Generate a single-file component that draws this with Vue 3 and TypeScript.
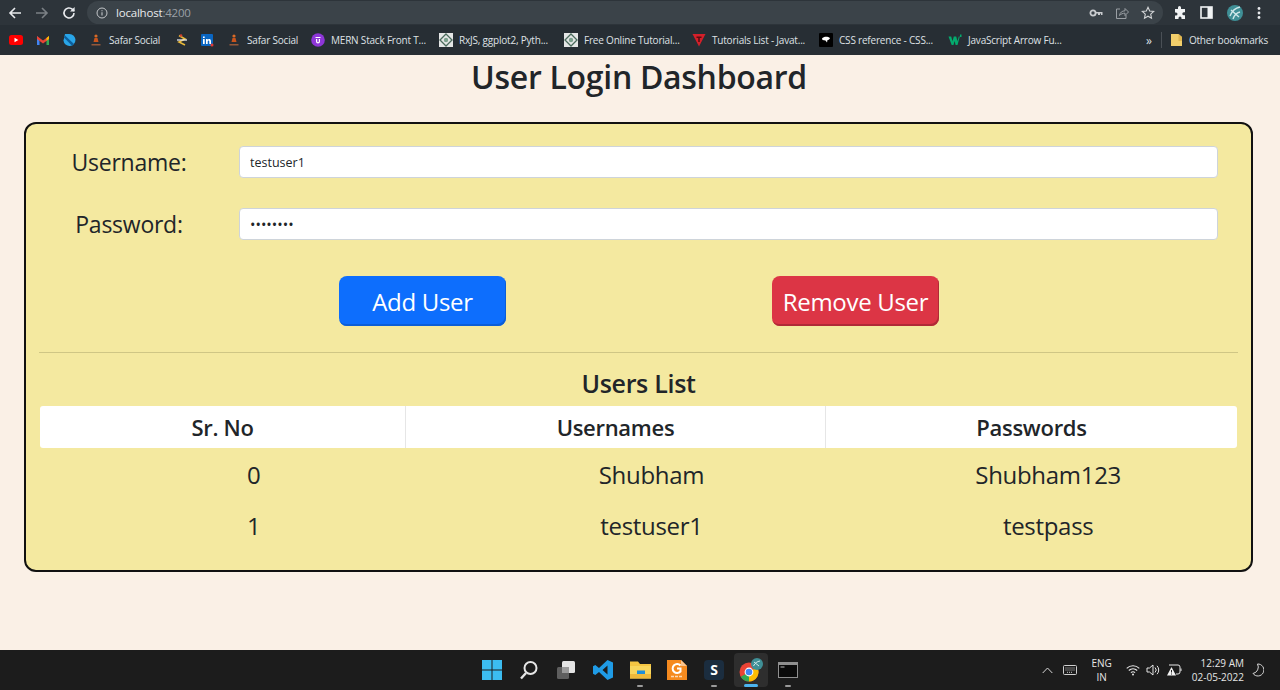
<template>
  <div class="screen">
    <div class="toolbar">
      <svg class="nav" width="16" height="16" viewBox="0 0 16 16"><path d="M14 8H3M8 3 3 8l5 5" fill="none" stroke="#e8eaed" stroke-width="1.6" /></svg>
      <svg class="nav fwd" width="16" height="16" viewBox="0 0 16 16"><path d="M2 8h11M8 3l5 5-5 5" fill="none" stroke="#7b8085" stroke-width="1.6" /></svg>
      <svg class="nav" width="16" height="16" viewBox="0 0 16 16"><path d="M13 8a5 5 0 1 1-1.5-3.6L13 6" fill="none" stroke="#e8eaed" stroke-width="1.6" /><path d="M13.6 2v4.6H9z" fill="#e8eaed" /></svg>
      <div class="omnibox">
        <svg width="12" height="12" viewBox="0 0 12 12"><circle cx="6" cy="6" r="5" fill="none" stroke="#c4c7ca" stroke-width="1" /><path d="M6 5.2v3.4M6 3.2v1" stroke="#c4c7ca" stroke-width="1.1" /></svg>
        <span class="url">localhost<span class="port">:4200</span></span>
        <span class="spacer"></span>
        <svg class="omni-icon" width="14" height="10" viewBox="0 0 14 10"><circle cx="4" cy="5" r="2.6" fill="none" stroke="#c9cccf" stroke-width="1.8" /><path d="M6.5 4h7v3h-1.5V5.6h-1V7H9V5.6H6.500z" fill="#c9cccf" /></svg>
        <svg class="omni-icon" width="14" height="14" viewBox="0 0 14 14"><path d="M5 3H1.500v9.500h9.500V9" fill="none" stroke="#9a9fa4" stroke-width="1" /><path d="M4.500 9.500c.5-3 2.500-4.700 5.500-4.700V2.500L13.500 6 10 9.500V7.200c-2.200 0-4 .7-5.500 2.300z" fill="none" stroke="#9a9fa4" stroke-width="1" /></svg>
        <svg class="omni-icon last" width="14" height="14" viewBox="0 0 14 14"><path d="m7 1.300 1.700 3.700 4 .5-3 2.700.8 4L7 10.200l-3.500 2 .8-4-3-2.700 4-.5z" fill="none" stroke="#d4d6d8" stroke-width="1.100" /></svg>
      </div>
      <svg class="tool" width="14" height="14" viewBox="0 0 14 14"><path d="M5 1.500a1.500 1.500 0 0 1 3 0V3h4v3.300h-1.200a1.500 1.500 0 0 0 0 3H12V13H8.500v-1a1.500 1.500 0 0 0-3 0v1H2V9.500h1a1.500 1.500 0 0 0 0-3H2V3h3z" fill="#f1f3f4" /></svg>
      <svg class="tool" width="13" height="13" viewBox="0 0 13 13"><rect x="1" y="1" width="11" height="11" fill="none" stroke="#f1f3f4" stroke-width="1.600" /><rect x="7.500" y="1" width="4.500" height="11" fill="#f1f3f4" /></svg>
      <svg class="tool" width="18" height="18" viewBox="0 0 18 18"><circle cx="9" cy="9" r="8" fill="#3f8f96" /><path d="M4 12c2-5 5-8 10-9M5 6l8 7M7 15c1-3 3-6 7-7" fill="none" stroke="#cfe8ea" stroke-width="1.400" /></svg>
      <svg class="tool" width="4" height="14" viewBox="0 0 4 14"><circle cx="2" cy="2.500" r="1.400" fill="#e8eaed" /><circle cx="2" cy="7" r="1.400" fill="#e8eaed" /><circle cx="2" cy="11.500" r="1.400" fill="#e8eaed" /></svg>
    </div>

    <div class="bookmarks">
      <div v-for="mark in bookmarks" :key="mark.id" class="mark" :style="{ width: mark.width + 'px' }">
        <svg width="14" height="14" viewBox="0 0 14 14">
          <template v-if="mark.icon === 'youtube'">
            <rect y="2" width="14" height="10" rx="2.500" fill="#f00" /><path d="m5.500 4.800 3.800 2.200-3.800 2.200z" fill="#fff" />
          </template>
          <template v-else-if="mark.icon === 'gmail'">
            <path d="M1 3v9h2.500V6.500z" fill="#4285f4" /><path d="M13 3v9h-2.500V6.500z" fill="#34a853" /><path d="M1 3l6 4.500L13 3v3L7 10.500 1 6z" fill="#ea4335" /><path d="M10.500 5 13 3v3l-2.500 1.800z" fill="#fbbc04" />
          </template>
          <template v-else-if="mark.icon === 'drop'">
            <path d="M3 1h4.500a6 6 0 1 1-6 6.500z" fill="#29a5e8" /><path d="M3 2.500 12 11a6 6 0 0 1-2 1.800L2 4.500z" fill="#0d5f9c" />
          </template>
          <template v-else-if="mark.icon === 'safar'">
            <circle cx="7" cy="3" r="1.600" fill="#d86a27" /><path d="M5.500 5h3l1 4h-5z" fill="#c9541c" /><path d="M2.500 11h9v1.500h-9z" fill="#94583a" />
          </template>
          <template v-else-if="mark.icon === 'stack'">
            <path d="M4 2.500 10 6 4 9l6 3" fill="none" stroke="#e8b93a" stroke-width="1.600" /><path d="M2 7h10" stroke="#e8eaed" stroke-width="1.300" /><circle cx="6" cy="2.500" r="1.300" fill="#d0402f" />
          </template>
          <template v-else-if="mark.icon === 'linkedin'">
            <rect x="1" y="1" width="12" height="12" rx="1" fill="#0a66c2" /><path d="M3 6h1.700v5H3zM3 3.500h1.700v1.500H3zM6 6h1.600v.8c.9-1.400 3.400-1.100 3.400 1.200v3H9.300V8.500c0-1.300-1.600-1.200-1.600 0V11H6z" fill="#fff" /><circle cx="12" cy="12" r="1.500" fill="#e53935" />
          </template>
          <template v-else-if="mark.icon === 'mern'">
            <circle cx="7" cy="7" r="6.800" fill="#8e36d8" /><path d="M4.500 4h5v1h-5zM5 6v2.500a2 2 0 0 0 4 0V6H7.800v2.500a.8.8 0 0 1-1.600 0V6z" fill="#fff" />
          </template>
          <template v-else-if="mark.icon === 'gfg'">
            <rect x="0" y="0" width="14" height="14" fill="#e4e6e6" /><path d="M7 1 13 7 7 13 1 7z" fill="none" stroke="#4a6b5c" stroke-width="1.300" /><circle cx="7" cy="7" r="2.200" fill="#7aa08c" />
          </template>
          <template v-else-if="mark.icon === 'tutorials'">
            <path d="M.5 1h13L7 13.500z" fill="#d3202a" /><path d="M4.500 3.500h5v1.500H7.800v4H6.200V5H4.500z" fill="#5a0c10" />
          </template>
          <template v-else-if="mark.icon === 'css'">
            <rect x="0" y="0" width="14" height="14" rx="1" fill="#000" /><path d="M3 5.500c1.500-2 5.500-2.500 8-.5-.5 1.500-1.500 2-2.500 2l-.5 2.500-1.500-2L3.500 7z" fill="#fff" />
          </template>
          <template v-else-if="mark.icon === 'w3'">
            <path d="M.5 3.500h2.700l1.300 4.800 1.300-4.800h2.400l1.300 4.800 1.300-4.800h1L9.500 12H7.600L6.600 8 5.500 12H3.700z" fill="#04aa6d" /><path d="M12 1.500h1.500V4H12z" fill="#04aa6d" />
          </template>
        </svg>
        <span v-if="mark.label" class="mark-label">{{ mark.label }}</span>
      </div>
      <span class="spacer"></span>
      <span class="more">»</span>
      <span class="divider"></span>
      <svg width="13" height="14" viewBox="0 0 13 14"><path d="M1 1h7.500L12 4v9H1z" fill="#f2cf6b" /><path d="M8.500 1 12 4v4H8.500z" fill="#e0b64f" /></svg>
      <span class="mark-label other">Other bookmarks</span>
    </div>

    <main class="page">
      <h1>User Login Dashboard</h1>
      <section class="card">
        <div class="form-row">
          <label>Username:</label>
          <input type="text" value="testuser1" />
        </div>
        <div class="form-row">
          <label>Password:</label>
          <input class="secret" type="password" value="testuser" />
        </div>
        <div class="actions">
          <button class="btn add">Add User</button>
          <button class="btn remove">Remove User</button>
        </div>
        <hr />
        <h2>Users List</h2>
        <div class="table-head">
          <div class="th first">Sr. No</div>
          <div class="th second">Usernames</div>
          <div class="th third">Passwords</div>
        </div>
        <div v-for="(user, i) in users" :key="user.name" class="table-row">
          <div>{{ i }}</div>
          <div>{{ user.name }}</div>
          <div>{{ user.pass }}</div>
        </div>
      </section>
    </main>

    <footer class="taskbar">
      <div class="task-icons">
        <div class="task"><svg width="20" height="20" viewBox="0 0 20 20"><path d="M0 0h9.500v9.500H0zM10.500 0H20v9.500h-9.500zM0 10.500h9.500V20H0zM10.500 10.500H20V20h-9.500z" fill="#3cbcf0" /></svg></div>
        <div class="task"><svg width="20" height="20" viewBox="0 0 20 20"><circle cx="11.500" cy="8" r="6" fill="none" stroke="#e6e6e6" stroke-width="2" /><path d="M7 13 2 18.500" stroke="#e6e6e6" stroke-width="2.400" /></svg></div>
        <div class="task"><svg width="20" height="20" viewBox="0 0 20 20"><rect x="1" y="7" width="12" height="12" rx="1.500" fill="#5e5e5e" /><rect x="6" y="1" width="13" height="12" rx="1.500" fill="#e4e4e4" /><rect x="6" y="7" width="7" height="6" fill="#9a9a9a" /></svg></div>
        <div class="task"><svg width="20" height="20" viewBox="0 0 20 20"><path d="M14.500 0 20 2.500v15L14.500 20 6 12l-3.700 3L0 13.700V6.300L2.300 5 6 8zM14.500 5.500 9.500 10l5 4.500z" fill="#1f9be6" /></svg></div>
        <div class="task dot"><svg width="21" height="20" viewBox="0 0 21 20"><path d="M0 1.500h8l2 2.500h11v3H0z" fill="#f5c542" /><path d="M0 6h21v12.500H0z" fill="#f9d65c" /><path d="M0 14h21v4.500H0z" fill="#efb93a" /><path d="M7 10.500h8v3.500H7z" fill="#1f8fd9" /></svg></div>
        <div class="task"><svg width="20" height="20" viewBox="0 0 20 20"><path d="M0 0h14l6 6v14H0z" fill="#f58a1f" /><path d="M14 0l6 6h-6z" fill="#fbc48c" /><path d="M13.500 5.500a4.500 4.500 0 1 0 0 6v-3H10" fill="none" stroke="#fff" stroke-width="2" /><path d="M4 16.500h12" stroke="#ffd9b3" stroke-width="1.500" stroke-dasharray="3 1" /></svg></div>
        <div class="task dot"><svg width="20" height="20" viewBox="0 0 20 20"><rect width="20" height="20" rx="4" fill="#1b2d3f" /><text x="10" y="15" text-anchor="middle" class="s-glyph">S</text></svg></div>
        <div class="task active">
          <svg width="26" height="26" viewBox="0 0 26 26">
            <circle cx="11" cy="15" r="9.500" fill="#ea4335" />
            <path d="M11 15 2.800 19.800A9.500 9.500 0 0 0 11 24.500z" fill="#34a853" />
            <path d="M11 15l8.200-4.800a9.500 9.500 0 0 1-8.200 14.300z" fill="#fbbc04" />
            <circle cx="11" cy="15" r="4.400" fill="#fff" /><circle cx="11" cy="15" r="3.300" fill="#4285f4" />
            <circle cx="19" cy="7" r="6" fill="#3f8f96" /><path d="M15.500 9c1.500-3 3.500-4.500 6.500-5M16 5l5 4" stroke="#cfe8ea" stroke-width="1" fill="none" />
          </svg>
        </div>
        <div class="task dot"><svg width="20" height="16" viewBox="0 0 20 16"><rect width="20" height="16" fill="#8f8f8f" /><rect x="1" y="3" width="18" height="12" fill="#0b0b0b" /><path d="M2.500 5h4" stroke="#bbb" /></svg></div>
      </div>
      <div class="tray">
        <svg class="chevron" width="11" height="7" viewBox="0 0 11 7"><path d="m.7 6 4.800-5 4.800 5" fill="none" stroke="#d8d8d8" stroke-width="1" /></svg>
        <svg class="keyboard" width="14" height="10" viewBox="0 0 14 10"><rect x=".5" y=".5" width="13" height="9" rx="1" fill="none" stroke="#cfcfcf" /><path d="M2.500 3h9M2.500 5h9M4 7.300h6" stroke="#cfcfcf" stroke-dasharray="1 1" /></svg>
        <div class="lang"><span>ENG</span><span>IN</span></div>
        <svg class="wifi" width="14" height="12" viewBox="0 0 14 12"><path d="M.7 4.300c3.600-3.400 9-3.400 12.600 0M2.800 6.500c2.400-2.200 6-2.200 8.400 0M4.900 8.600c1.200-1 3-1 4.200 0" fill="none" stroke="#e6e6e6" stroke-width="1.100" /><circle cx="7" cy="10.600" r="1" fill="#e6e6e6" /></svg>
        <svg class="volume" width="15" height="12" viewBox="0 0 15 12"><path d="M1 4h2.500L7 1v10L3.500 8H1z" fill="none" stroke="#e6e6e6" /><path d="M9 3.500a3.500 3.500 0 0 1 0 5M11 1.800a6 6 0 0 1 0 8.400" fill="none" stroke="#e6e6e6" /></svg>
        <svg class="battery" width="16" height="12" viewBox="0 0 16 12"><path d="M3 1h9a2 2 0 0 1 2 2v5a2 2 0 0 1-2 2h-2" fill="none" stroke="#e6e6e6" /><path d="M14.500 4.500h1v2.500h-1z" fill="#e6e6e6" /><path d="M5.500 3 10 11.500H1z" fill="#f2f2f2" /><path d="M5.500 6v2.500M5.500 9.500v1" stroke="#222" /></svg>
        <div class="clock"><span>12:29 AM</span><span>02-05-2022</span></div>
        <svg class="moon" width="12" height="14" viewBox="0 0 12 14"><path d="M5.500 1a6 6 0 1 1-4.500 9.500A6.500 6.500 0 0 0 5.500 1z" fill="none" stroke="#d8d8d8" /></svg>
      </div>
    </footer>
  </div>
</template>

<script setup lang="ts">
interface Bookmark {
  id: number;
  icon: string;
  label?: string;
  width: number;
}

const bookmarks: Bookmark[] = [
  { id: 1, icon: 'youtube', width: 27 },
  { id: 2, icon: 'gmail', width: 26 },
  { id: 3, icon: 'drop', width: 27 },
  { id: 4, icon: 'safar', label: 'Safar Social', width: 86 },
  { id: 5, icon: 'stack', width: 25 },
  { id: 6, icon: 'linkedin', width: 27 },
  { id: 7, icon: 'safar', label: 'Safar Social', width: 84 },
  { id: 8, icon: 'mern', label: 'MERN Stack Front T...', width: 128 },
  { id: 9, icon: 'gfg', label: 'RxJS, ggplot2, Pyth...', width: 125 },
  { id: 10, icon: 'gfg', label: 'Free Online Tutorial...', width: 128 },
  { id: 11, icon: 'tutorials', label: 'Tutorials List - Javat...', width: 127 },
  { id: 12, icon: 'css', label: 'CSS reference - CSS...', width: 129 },
  { id: 13, icon: 'w3', label: 'JavaScript Arrow Fu...', width: 120 },
];

const users = [
  { name: 'Shubham', pass: 'Shubham123' },
  { name: 'testuser1', pass: 'testpass' },
];
</script>

<style>
html,
body {
  margin: 0;
  background: #faf0e6;
}
</style>

<style scoped>
.screen {
  height: 690px;
  display: flex;
  flex-direction: column;
  overflow: hidden;
  font-family: "Open Sans", "Noto Sans", sans-serif;
  color: #212529;
}

.toolbar {
  height: 25px;
  flex: none;
  display: flex;
  align-items: center;
  padding-left: 7px;
  background: #2d343a;
}

.nav {
  margin-right: 11px;
}

.omnibox {
  width: 1076px;
  height: 23px;
  margin-left: -1px;
  margin-right: 10px;
  padding: 0 8px 0 9px;
  box-sizing: border-box;
  border-radius: 12px;
  display: flex;
  align-items: center;
  background: #3b4349;
}

.url {
  margin-left: 8px;
  font-size: 11.5px;
  letter-spacing: -0.2px;
  color: #e8eaed;
}

.port {
  color: #9aa0a6;
}

.spacer {
  flex: 1;
}

.omni-icon {
  margin-right: 12px;
}

.omni-icon.last {
  margin-right: 0;
}

.tool {
  margin-right: 13px;
  flex: none;
}

.bookmarks {
  height: 30px;
  flex: none;
  display: flex;
  align-items: center;
  padding: 0 12px 0 9px;
  box-sizing: border-box;
  background: #272e34;
}

.mark {
  display: flex;
  align-items: center;
  gap: 6px;
  flex: none;
  white-space: nowrap;
}

.mark svg,
.bookmarks > svg {
  flex: none;
}

.mark-label {
  font-size: 10px;
  letter-spacing: -0.2px;
  color: #dfe1e5;
}

.mark-label.other {
  margin-left: 6px;
}

.more {
  font-size: 12px;
  color: #dfe1e5;
}

.divider {
  width: 1px;
  height: 16px;
  margin: 0 8px 0 9px;
  background: #4a5056;
}

.page {
  flex: 1;
  background: #faf0e6;
}

h1 {
  margin: 0;
  height: 45px;
  line-height: 43px;
  text-align: center;
  font-size: 32px;
  font-weight: 600;
  letter-spacing: -0.3px;
  padding-right: 2px;
}

.card {
  height: 450px;
  margin: 22px 27px 0 24px;
  padding: 22px 13px 0;
  box-sizing: border-box;
  border: 2px solid #111;
  border-radius: 12px;
  background: #f4e9a0;
}

.form-row {
  display: grid;
  grid-template-columns: 180px 1fr;
  column-gap: 20px;
  align-items: center;
  height: 32px;
  margin-bottom: 30px;
  padding-right: 20px;
}

label {
  text-align: center;
  font-size: 23px;
  letter-spacing: -0.25px;
}

input {
  height: 32px;
  box-sizing: border-box;
  padding: 0 10px;
  border: 1px solid #ced4da;
  border-radius: 4px;
  background: #fff;
  font-family: inherit;
  font-size: 12.500px;
  color: #212529;
}

input.secret {
  font-size: 14.500px;
}

.actions {
  display: flex;
  gap: 266px;
  padding-left: 300px;
  margin-top: 36px;
}

.btn {
  width: 167px;
  height: 50px;
  padding: 0;
  border: 0;
  border-radius: 8px;
  font-family: inherit;
  font-size: 24px;
  letter-spacing: -0.3px;
  color: #fff;
}

.add {
  background: #0d6efd;
  box-shadow: inset -1px -2px 0 #0b5ed7;
}

.remove {
  background: #dc3545;
  box-shadow: inset -1px -2px 0 #b02a37;
}

hr {
  margin: 26px 0 0;
  border: 0;
  border-top: 1px solid #cfc685;
}

h2 {
  margin: 0;
  height: 53px;
  line-height: 60px;
  text-align: center;
  font-size: 25px;
  font-weight: 600;
  letter-spacing: -0.3px;
}

.table-head {
  display: flex;
  height: 42px;
  margin: 0 1px;
  border-radius: 3px;
  background: #fff;
  font-size: 22px;
  font-weight: 600;
  letter-spacing: -0.3px;
}

.th {
  display: flex;
  align-items: center;
  justify-content: center;
  box-sizing: border-box;
  border-right: 1px solid #e6e6e6;
}

.first {
  width: 366px;
}

.second {
  width: 420px;
}

.third {
  flex: 1;
  border-right: 0;
}

.table-row {
  display: grid;
  grid-template-columns: repeat(3, 1fr);
  height: 51px;
  line-height: 53px;
  text-align: center;
  font-size: 24px;
  letter-spacing: -0.3px;
}

.table-row div:nth-child(1) {
  padding-left: 30px;
}

.table-row div:nth-child(2) {
  padding-left: 26px;
}

.table-row div:nth-child(3) {
  padding-left: 20px;
}

.taskbar {
  height: 40px;
  flex: none;
  display: flex;
  align-items: center;
  background: #1c1c1c;
  color: #e6e6e6;
}

.task-icons {
  display: flex;
  align-items: center;
  margin-left: 475px;
  gap: 3px;
}

.task {
  position: relative;
  width: 34px;
  height: 34px;
  display: flex;
  align-items: center;
  justify-content: center;
  border-radius: 4px;
}

.task.active {
  background: #2e2e2e;
}

.task.active::after {
  content: "";
  position: absolute;
  left: 10px;
  right: 10px;
  bottom: 0;
  height: 3px;
  border-radius: 2px;
  background: #4cb4f0;
}

.task.dot::after {
  content: "";
  position: absolute;
  left: 14px;
  right: 14px;
  bottom: 0;
  height: 2px;
  border-radius: 1px;
  background: #9a9a9a;
}

.s-glyph {
  font-family: "Open Sans", sans-serif;
  font-size: 14px;
  font-weight: 700;
  fill: #fff;
}

.tray {
  margin-left: auto;
  display: flex;
  align-items: center;
  font-size: 10px;
}

.chevron {
  margin-right: 10px;
  margin-left: -1px;
}

.keyboard {
  margin-right: 14px;
}

.lang {
  display: flex;
  flex-direction: column;
  align-items: center;
  line-height: 14px;
  margin-right: 14px;
}

.wifi {
  margin-right: 6px;
}

.volume {
  margin-right: 5px;
}

.battery {
  margin-right: 10px;
}

.clock {
  display: flex;
  flex-direction: column;
  align-items: flex-end;
  line-height: 14px;
  margin-right: 8px;
}

.moon {
  margin-right: 16px;
}
</style>
